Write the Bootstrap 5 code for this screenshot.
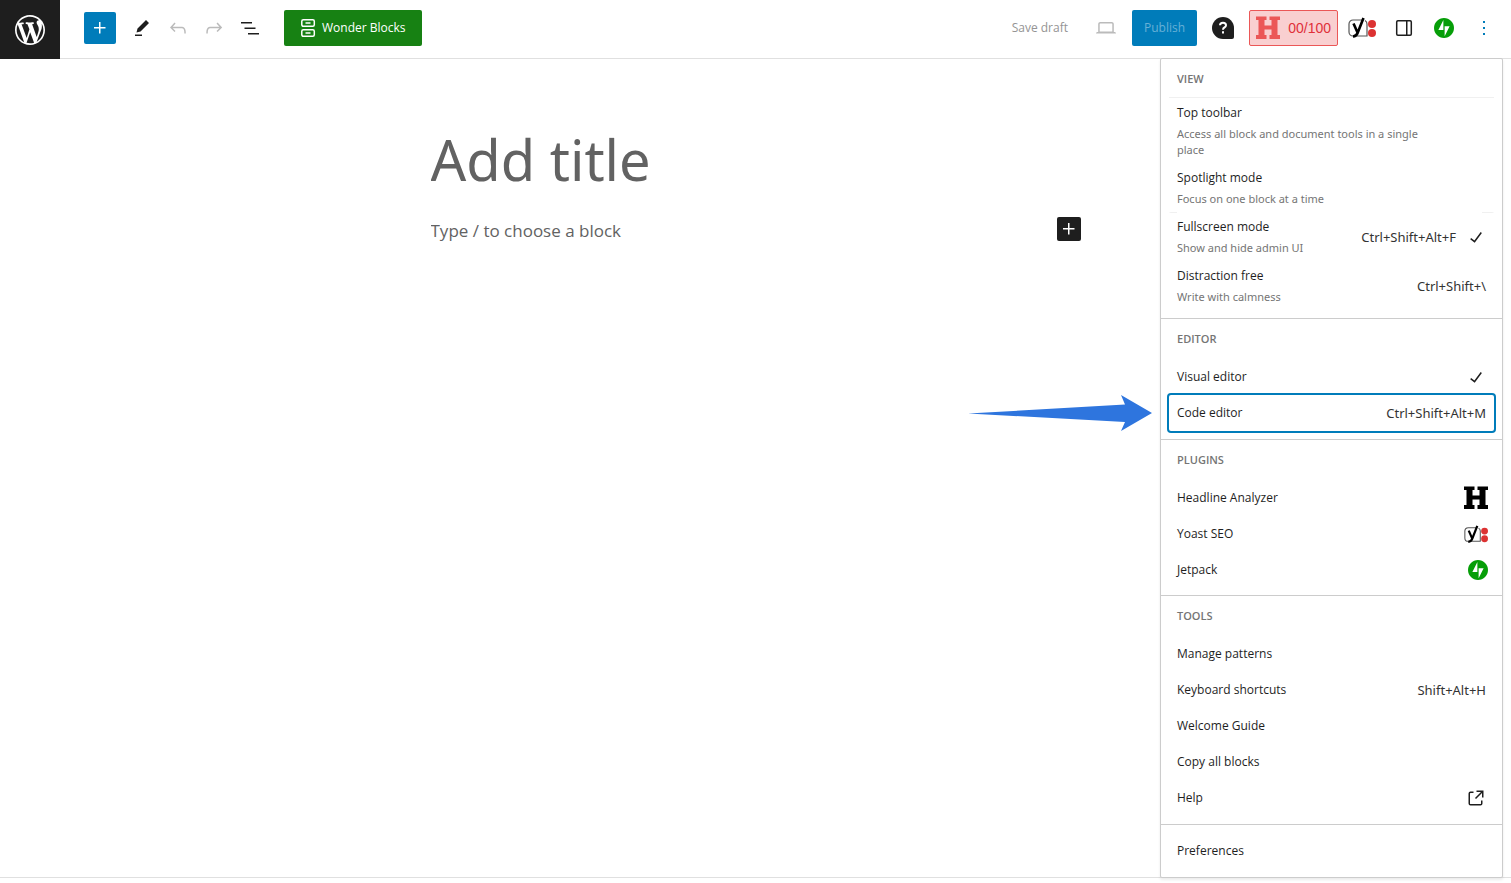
<!DOCTYPE html>
<html lang="en">
<head>
<meta charset="utf-8">
<meta name="viewport" content="width=device-width, initial-scale=1">
<title>Add New Post</title>
<link href="https://cdn.jsdelivr.net/npm/bootstrap@5.3.0/dist/css/bootstrap.min.css" rel="stylesheet">
<style>
  body { font-family: "Open Sans", "Noto Sans", sans-serif; font-size: 12px; line-height: 20px; color: #1e1e1e; }
  svg { display: block; fill: currentColor; flex: none; }
  .btn { --bs-btn-font-size: 12px; --bs-btn-line-height: 20px; --bs-btn-border-radius: 2px; --bs-btn-padding-x: 0; --bs-btn-padding-y: 0; --bs-btn-border-width: 0; --bs-btn-disabled-opacity: 1; }

  .editor-header { height: 59px; border-bottom: 1px solid #e0e0e0; }
  .header-tools { padding: 10px 9px 0 24px; }
  .site-link { width: 60px; height: 59px; background: #1e1e1e; color: #fff; }
  .tool { width: 36px; height: 36px; color: #1e1e1e; display: flex; align-items: center; justify-content: center; }
  .tool:disabled { color: #bbb; }
  .inserter { width: 32px; height: 32px; background: #007cba; color: #fff; }
  .wonder { height: 36px; min-width: 138px; padding: 0 14px; background: #178113; color: #fff; }
  .save-draft { margin-right: 20px; }
  .save-draft:disabled { color: #949494; }
  .publish { height: 36px; min-width: 65px; padding: 0 8px; }
  .publish:disabled { background: #007cba; color: #66b0d6; }
  .score { height: 36px; width: 89px; padding: 0 6px; background: #f9cfd0; border: 1px solid #eb5757; border-radius: 2px; color: #eb5757; }
  .score span { font: 14px/20px "Liberation Sans", sans-serif; color: #e0303a; }
  .seo { margin: 0 6px; }
  .more { color: #007cba; }

  .canvas { max-width: 650px; padding-top: 66px; }
  .post-title, .block-prompt { border: 0; padding: 0; outline: 0; background: none; width: 100%; min-width: 0; color: #626262; }
  .post-title { font-family: "Noto Sans", sans-serif; font-size: 56px; line-height: 68px; height: 68px; }
  .block-prompt { font-size: 17px; line-height: 28px; }
  .post-title::placeholder, .block-prompt::placeholder { color: #626262; opacity: 1; }
  .block-add { width: 24px; height: 24px; background: #1e1e1e; color: #fff; }
  .editor-footer { height: 6px; border-top: 1px solid #e0e0e0; }

  .options { top: 58px; right: 8px; width: 343px; background: #fff; border: 1px solid #ccc; border-radius: 2px; box-shadow: 0 2px 3px rgba(0,0,0,.08); z-index: 5; }
  .menu-section { padding: 0 8px 8px; }
  .menu-section.compact { padding-bottom: 7px; }
  .menu-section + .menu-section { border-top: 1px solid #ccc; }
  .menu-section.plain { padding-top: 8px; }
  .menu-heading { margin: 0; padding: 0 8px; font-size: 11px; line-height: 40px; font-weight: 600; color: #757575; }
  .menu-heading.ruled { height: 39px; border-bottom: 1px solid #f0f0f0; }
  .menu-row { width: 100%; min-height: 36px; padding: 0 8px; border-radius: 2px; text-align: left; color: #1e1e1e; text-decoration: none; }
  .menu-row.described { padding-top: 5px; padding-bottom: 5px; }
  .menu-row.described .text { max-width: 260px; }
  .menu-row.edged { background: linear-gradient(#f0f0f0, #f0f0f0) left top / 8px 1px no-repeat, linear-gradient(#f0f0f0, #f0f0f0) right top / 12px 1px no-repeat; }
  .menu-row small { display: block; font-family: "Noto Sans", sans-serif; font-size: 11px; line-height: 16px; margin-top: 3px; color: #757575; }
  .menu-row svg { margin-right: -2px; }
  .menu-row.current { box-shadow: 0 0 0 2px #007cba; }
  .keys { font-family: "Noto Sans", sans-serif; font-size: 13px; color: #333; }
  .pointer { right: calc(100% + 19px); top: 0; }
</style>
</head>
<body>
<svg class="d-none" aria-hidden="true">
  <symbol id="plus" viewBox="0 0 24 24"><path d="M11 12.5V17.5H12.5V12.5H17.5V11H12.5V6H11V11H6V12.5H11Z"/></symbol>
  <symbol id="check" viewBox="0 0 24 24"><path d="M16.7 7.1l-6.3 8.5-3.3-2.5-.9 1.2 4.5 3.4L17.9 8z"/></symbol>
  <symbol id="headline" viewBox="0 0 24 24"><path d="M0 .5h10.500V4H8.500v5.500h7V4h-2V.5H24V4h-2.500v15H24v4H13.500v-4h2v-5.500h-7V19h2v4H0v-4h2.500V4H0z"/></symbol>
  <symbol id="yoast" viewBox="0 0 28 22">
    <path d="M15 3H5a4 4 0 0 0-4 4v8a4 4 0 0 0 4 4h14V7a4 4 0 0 0-2-3.500" fill="#fff" stroke="#555" stroke-width="1.200"/>
    <path d="M5.500 6.500l4 9M15.500 1L9.800 15.500Q8.500 19.300 5 19.500" fill="none" stroke="#000" stroke-width="2.600"/>
    <circle cx="24" cy="7" r="4" fill="#dc3232"/><circle cx="24" cy="16" r="4" fill="#dc3232"/>
  </symbol>
  <symbol id="jetpack" viewBox="0 0 32 32"><path fill="#069e08" d="M16 0C7.200 0 0 7.200 0 16s7.200 16 16 16 16-7.200 16-16S24.800 0 16 0z"/><path fill="#fff" d="M15 19H7l8-16zM17 29V13h8z"/></symbol>
</svg>

<div class="d-flex flex-column min-vh-100 position-relative">
  <header class="editor-header d-flex align-items-start">
    <a class="site-link d-flex align-items-center justify-content-center" href="#" aria-label="View posts">
      <svg width="36" height="36" viewBox="-2 -2 24 24"><path d="M20 10c0-5.510-4.490-10-10-10C4.480 0 0 4.490 0 10c0 5.520 4.480 10 10 10 5.510 0 10-4.480 10-10zM7.780 15.370L4.370 6.220c.55-.02 1.170-.08 1.170-.08.5-.06.44-1.130-.06-1.110 0 0-1.450.11-2.370.11-.18 0-.37 0-.58-.01C4.120 2.690 6.870 1.110 10 1.110c2.330 0 4.450.87 6.050 2.340-.68-.11-1.650.39-1.650 1.580 0 .74.45 1.360.9 2.100.35.61.55 1.360.55 2.460 0 1.490-1.400 5-1.400 5l-3.030-8.370c.54-.02.82-.17.82-.17.5-.05.44-1.250-.06-1.220 0 0-1.440.12-2.380.12-.87 0-2.330-.12-2.330-.12-.5-.03-.56 1.200-.06 1.220l.92.08 1.260 3.410zM17.410 10c.24-.64.74-1.870.43-4.250.7 1.290 1.050 2.710 1.050 4.250 0 3.290-1.730 6.240-4.400 7.780.97-2.590 1.940-5.200 2.920-7.780zM6.100 18.090C3.120 16.650 1.110 13.530 1.110 10c0-1.300.23-2.480.72-3.590C3.250 10.300 4.670 14.200 6.100 18.090zm4.030-6.630l2.580 6.980c-.86.29-1.760.45-2.710.45-.79 0-1.570-.11-2.290-.33.81-2.380 1.620-4.740 2.420-7.100z"/></svg>
    </a>
    <div class="header-tools d-flex align-items-center flex-grow-1">
      <div class="d-flex align-items-center">
        <button class="btn tool inserter me-2" aria-label="Toggle block inserter"><svg width="24" height="24"><use href="#plus"/></svg></button>
        <button class="btn tool" aria-label="Tools"><svg width="24" height="24" viewBox="0 0 24 24"><path d="m19 7-3-3-8.500 8.500-1 4 4-1L19 7Zm-7 11.500H5V20h7v-1.500Z"/></svg></button>
        <button class="btn tool" disabled aria-label="Undo"><svg width="24" height="24" viewBox="0 0 24 24"><path d="M18.300 11.700c-.6-.6-1.400-.9-2.300-.9H6.700l2.900-3.300-1.100-1-4.500 5L8.500 16l1-1-2.700-2.700H16c.5 0 .9.200 1.300.5 1 1 1 3.400 1 4.500v.3h1.500v-.2c0-1.500 0-4.300-1.500-5.700z"/></svg></button>
        <button class="btn tool" disabled aria-label="Redo"><svg width="24" height="24" viewBox="0 0 24 24"><path d="M15.600 6.500l-1.100 1 2.900 3.300H8c-.9 0-1.700.3-2.300.9-1.400 1.500-1.400 4.200-1.400 5.600v.2h1.500v-.3c0-1.100 0-3.500 1-4.500.3-.3.7-.5 1.300-.5h9.200L14.500 15l1.100 1.100 4.600-4.600-4.600-5z"/></svg></button>
        <button class="btn tool" aria-label="Document overview"><svg width="24" height="24" viewBox="0 0 24 24"><path d="M3 6h11v1.500H3V6Zm3.500 5.500h11V13h-11v-1.500ZM21 17H10v1.500h11V17Z"/></svg></button>
        <button class="btn wonder d-flex align-items-center ms-3 gap-1"><svg width="20" height="20" viewBox="0 0 20 20"><g fill="none" stroke="#fff" stroke-width="1.500"><rect x="3.800" y="1.800" width="12.500" height="6.500" rx="1.500"/><rect x="3.800" y="11.800" width="12.500" height="6.500" rx="1.500"/><path d="M7.500 5h5M7.500 15h5"/></g></svg>Wonder Blocks</button>
      </div>
      <div class="d-flex align-items-center ms-auto">
        <button class="btn save-draft" disabled>Save draft</button>
        <button class="btn tool me-2" disabled aria-label="Preview"><svg width="24" height="24" viewBox="0 0 24 24"><path d="M20.500 16h-.7V8c0-1.100-.9-2-2-2H6.200c-1.100 0-2 .9-2 2v8h-.7c-.8 0-1.500.7-1.500 1.500h20c0-.8-.7-1.500-1.500-1.500zM5.700 8c0-.3.2-.5.5-.5h11.600c.3 0 .5.2.5.5v7.600H5.700V8z"/></svg></button>
        <button class="btn publish me-2" disabled>Publish</button>
        <button class="btn tool me-2" aria-label="Help Center"><svg width="22" height="22" viewBox="0 0 22 22"><path d="M11 0a11 11 0 0 0 0 22h9a2 2 0 0 0 2-2v-9A11 11 0 0 0 11 0z"/><path d="M8 8.300Q8 5.700 11 5.700t3 2.500q0 1.500-1.600 2.300-1.400.7-1.400 2.300M11 14.200v2.200" fill="none" stroke="#fff" stroke-width="2"/></svg></button>
        <button class="score d-flex align-items-center justify-content-between" aria-label="Headline score"><svg width="24" height="24"><use href="#headline"/></svg><span>00/100</span></button>
        <button class="btn tool seo" aria-label="Yoast SEO"><svg width="28" height="22"><use href="#yoast"/></svg></button>
        <button class="btn tool me-1" aria-label="Settings"><svg width="24" height="24" viewBox="0 0 24 24"><rect x="4.700" y="4.700" width="14.600" height="14.600" rx="1.200" fill="none" stroke="currentColor" stroke-width="1.500"/><path d="M14 5h1.500v14H14z"/></svg></button>
        <button class="btn tool me-1" aria-label="Jetpack"><svg width="20" height="20"><use href="#jetpack"/></svg></button>
        <button class="btn tool more" aria-label="Options"><svg width="24" height="24" viewBox="0 0 24 24"><path d="M13 19h-2v-2h2v2zm0-6h-2v-2h2v2zm0-6h-2V5h2v2z"/></svg></button>
      </div>
    </div>
  </header>

  <main class="flex-grow-1">
    <div class="canvas mx-auto">
      <input class="post-title d-block" type="text" placeholder="Add title" aria-label="Add title">
      <div class="d-flex align-items-start mt-4">
        <input class="block-prompt" type="text" placeholder="Type / to choose a block" aria-label="Block text">
        <button class="btn block-add flex-shrink-0" aria-label="Add block"><svg width="24" height="24"><use href="#plus"/></svg></button>
      </div>
    </div>
  </main>
  <footer class="editor-footer"></footer>

  <nav class="options position-absolute" aria-label="Options">
    <section class="menu-section">
      <h2 class="menu-heading ruled">VIEW</h2>
      <button class="btn menu-row described d-flex align-items-center"><span class="text">Top toolbar<small>Access all block and document tools in a single place</small></span></button>
      <button class="btn menu-row described d-flex align-items-center"><span class="text">Spotlight mode<small>Focus on one block at a time</small></span></button>
      <button class="btn menu-row described edged d-flex align-items-center"><span class="text me-auto">Fullscreen mode<small>Show and hide admin UI</small></span><span class="keys me-2">Ctrl+Shift+Alt+F</span><svg width="24" height="24"><use href="#check"/></svg></button>
      <button class="btn menu-row described d-flex align-items-center"><span class="text me-auto">Distraction free<small>Write with calmness</small></span><span class="keys">Ctrl+Shift+\</span></button>
    </section>
    <section class="menu-section">
      <h2 class="menu-heading">EDITOR</h2>
      <button class="btn menu-row d-flex align-items-center justify-content-between">Visual editor<svg width="24" height="24"><use href="#check"/></svg></button>
      <button class="btn menu-row current d-flex align-items-center justify-content-between position-relative">Code editor<span class="keys">Ctrl+Shift+Alt+M</span>
        <svg class="pointer position-absolute" width="184" height="36" viewBox="0 0 184 36"><path fill="#2e75de" d="M0 18.500L157 9.500 153 0 184 18 153 36 157 27z"/></svg>
      </button>
    </section>
    <section class="menu-section compact">
      <h2 class="menu-heading">PLUGINS</h2>
      <button class="btn menu-row d-flex align-items-center justify-content-between">Headline Analyzer<svg class="text-black" width="24" height="24"><use href="#headline"/></svg></button>
      <button class="btn menu-row d-flex align-items-center justify-content-between">Yoast SEO<svg width="24" height="19"><use href="#yoast"/></svg></button>
      <button class="btn menu-row d-flex align-items-center justify-content-between">Jetpack<svg width="20" height="20"><use href="#jetpack"/></svg></button>
    </section>
    <section class="menu-section">
      <h2 class="menu-heading">TOOLS</h2>
      <a class="menu-row d-flex align-items-center" href="#">Manage patterns</a>
      <button class="btn menu-row d-flex align-items-center justify-content-between">Keyboard shortcuts<span class="keys">Shift+Alt+H</span></button>
      <button class="btn menu-row d-flex align-items-center">Welcome Guide</button>
      <button class="btn menu-row d-flex align-items-center">Copy all blocks</button>
      <a class="menu-row d-flex align-items-center justify-content-between" href="#">Help<svg width="24" height="24" viewBox="0 0 24 24"><path d="M19.500 4.500h-7V6h4.440l-5.970 5.970 1.060 1.060L18 7.060v4.440h1.500v-7Zm-13 1a2 2 0 0 0-2 2v10a2 2 0 0 0 2 2h10a2 2 0 0 0 2-2v-3H17v3a.5.5 0 0 1-.5.5h-10a.5.5 0 0 1-.5-.5v-10a.5.5 0 0 1 .5-.5h3V5.500h-3Z"/></svg></a>
    </section>
    <section class="menu-section plain">
      <button class="btn menu-row d-flex align-items-center">Preferences</button>
    </section>
  </nav>
</div>
<script src="https://cdn.jsdelivr.net/npm/bootstrap@5.3.0/dist/js/bootstrap.bundle.min.js"></script>
</body>
</html>
